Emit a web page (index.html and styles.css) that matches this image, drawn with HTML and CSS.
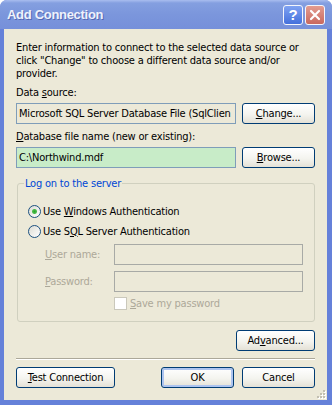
FILE: index.html
```html
<!DOCTYPE html>
<html lang="en">
<head>
    <meta charset="UTF-8">
    <title>Add Connection</title>
    <link rel="stylesheet" href="styles.css">
</head>
<body>
    <div class="window">
        <div class="titlebar">
            <span class="title">Add Connection</span>
            <div class="caption-buttons">
                <span class="cap help">?</span>
                <span class="cap close">
                    <svg width="12" height="12" viewBox="0 0 12 12"><path d="M2 2 L10 10 M10 2 L2 10" stroke="#fff" stroke-width="2.2" stroke-linecap="round"/></svg>
                </span>
            </div>
        </div>

        <div class="dialog">
            <p class="intro">Enter information to connect to the selected data source or<br>click "Change" to choose a different data source and/or<br>provider.</p>

            <div class="label">Data <u>s</u>ource:</div>
            <div class="field-row">
                <div class="textbox readonly">Microsoft SQL Server Database File (SqlClien</div>
                <button class="btn"><u>C</u>hange...</button>
            </div>

            <div class="label"><u>D</u>atabase file name (new or existing):</div>
            <div class="field-row">
                <div class="textbox file">C:\Northwind.mdf</div>
                <button class="btn"><u>B</u>rowse...</button>
            </div>

            <fieldset class="group">
                <legend>Log on to the server</legend>
                <div class="radio-row first">
                    <span class="radio checked"></span>
                    <span>Use <u>W</u>indows Authentication</span>
                </div>
                <div class="radio-row">
                    <span class="radio"></span>
                    <span>Use S<u>Q</u>L Server Authentication</span>
                </div>
                <div class="cred">
                    <span class="disabled"><u>U</u>ser name:</span>
                    <div class="cred-input"></div>
                    <span class="disabled"><u>P</u>assword:</span>
                    <div class="cred-input"></div>
                </div>
                <div class="save-row">
                    <span class="checkbox"></span>
                    <span class="disabled"><u>S</u>ave my password</span>
                </div>
            </fieldset>

            <div class="advanced-row">
                <button class="btn wide">Ad<u>v</u>anced...</button>
            </div>

            <div class="separator"></div>

            <div class="footer">
                <button class="btn test"><u>T</u>est Connection</button>
                <button class="btn default">OK</button>
                <button class="btn">Cancel</button>
            </div>

            <svg class="grip" width="10" height="10" viewBox="0 0 10 10">
                <g fill="#fff">
                    <rect x="8" y="2" width="2" height="2"/><rect x="5" y="5" width="2" height="2"/><rect x="8" y="5" width="2" height="2"/>
                    <rect x="2" y="8" width="2" height="2"/><rect x="5" y="8" width="2" height="2"/><rect x="8" y="8" width="2" height="2"/>
                </g>
                <g fill="#c2bfb1">
                    <rect x="7" y="1" width="2" height="2"/><rect x="4" y="4" width="2" height="2"/><rect x="7" y="4" width="2" height="2"/>
                    <rect x="1" y="7" width="2" height="2"/><rect x="4" y="7" width="2" height="2"/><rect x="7" y="7" width="2" height="2"/>
                </g>
            </svg>
        </div>
    </div>
</body>
</html>
```

FILE: styles.css
```css
* {
    box-sizing: border-box;
}

html, body {
    margin: 0;
    padding: 0;
}

body {
    font-family: "DejaVu Sans Condensed", "Liberation Sans", sans-serif;
    font-size: 11px;
    line-height: 13px;
    letter-spacing: -0.2px;
    color: #000;
    background: #fff;
}

.window {
    width: 332px;
    height: 405px;
    display: flex;
    flex-direction: column;
    background: #6581d9;
    border-radius: 7px 7px 0 0;
}

.titlebar {
    height: 29px;
    display: flex;
    align-items: center;
    padding: 0 7px 0 7px;
    border-radius: 7px 7px 0 0;
    background: linear-gradient(#a9bdef 0, #849fe0 3px, #7b96dc 50%, #7690da 100%);
}

.title {
    flex: 1;
    font-family: "Liberation Sans", sans-serif;
    font-weight: bold;
    font-size: 13px;
    letter-spacing: -0.3px;
    color: #eef2fc;
    text-shadow: 1px 1px 0 #5468b4;
}

.caption-buttons {
    display: flex;
    gap: 2px;
}

.cap {
    width: 20px;
    height: 20px;
    border: 1px solid #f4f6fc;
    border-radius: 3px;
    display: flex;
    align-items: center;
    justify-content: center;
}

.help {
    background: linear-gradient(#7fa2f2, #4470dc);
    color: #fff;
    font-family: "Liberation Sans", sans-serif;
    font-weight: bold;
    font-size: 15px;
}

.close {
    background: linear-gradient(#e39c90, #c9695e);
}

.dialog {
    position: relative;
    flex: 1;
    margin: 0 5px 5px 4px;
    padding: 12px 12px 0 12px;
    background: #ece9d8;
}

.intro {
    margin: 0;
}

.label {
    margin-top: 6px;
}

.field-row {
    display: flex;
    gap: 6px;
    margin-top: 4px;
}

.textbox {
    flex: 1;
    height: 21px;
    line-height: 19px;
    padding: 0 2px;
    border: 1px solid #7f9db9;
    white-space: nowrap;
    overflow: hidden;
}

.readonly {
    background: #ece9d8;
}

.file {
    background: #c8ecc8;
}

.btn {
    width: 73px;
    height: 21px;
    padding: 0;
    font: inherit;
    letter-spacing: inherit;
    color: #000;
    border: 1px solid #003c74;
    border-radius: 3px;
    background: linear-gradient(#ffffff, #f4f4ef 55%, #e4e1d6);
}

.btn.wide {
    width: 79px;
}

.btn.test {
    width: 99px;
    margin-right: auto;
}

.btn.default {
    box-shadow: inset 0 0 0 2px #adc4ef;
}

.group {
    margin: 9px 0 0 1px;
    padding: 0 6px 11px 6px;
    border: 1px solid #d0d0bf;
    border-radius: 3px;
}

.group legend {
    padding: 0 1px;
    color: #0046d5;
}

.radio-row {
    display: flex;
    align-items: center;
    gap: 2px;
    height: 20px;
    margin-left: 4px;
}

.radio-row.first {
    margin-top: 11px;
}

.radio {
    width: 13px;
    height: 13px;
    border: 1px solid #1c5180;
    border-radius: 50%;
    background: linear-gradient(135deg, #dcdcd3, #ffffff);
}

.radio.checked {
    background: radial-gradient(circle, #2aa52a 0, #4cbc4c 2px, rgba(255,255,255,0) 3px), linear-gradient(135deg, #dcdcd3, #ffffff);
}

.cred {
    display: grid;
    grid-template-columns: 69px 189px;
    row-gap: 6px;
    align-items: center;
    margin: 3px 0 0 21px;
}

.cred-input {
    height: 21px;
    border: 1px solid #a8aaa6;
}

.disabled {
    color: #aca899;
}

.save-row {
    display: flex;
    align-items: center;
    gap: 3px;
    margin: 5px 0 0 90px;
}

.checkbox {
    width: 13px;
    height: 13px;
    border: 1px solid #cac8bb;
    background: #fff;
}

.advanced-row {
    display: flex;
    justify-content: flex-end;
    margin-top: 8px;
}

.separator {
    margin-top: 7px;
    height: 2px;
    border-top: 1px solid #aca899;
    border-bottom: 1px solid #fff;
}

.footer {
    display: flex;
    gap: 8px;
    margin-top: 7px;
}

.grip {
    position: absolute;
    right: 1px;
    bottom: 1px;
}
```
